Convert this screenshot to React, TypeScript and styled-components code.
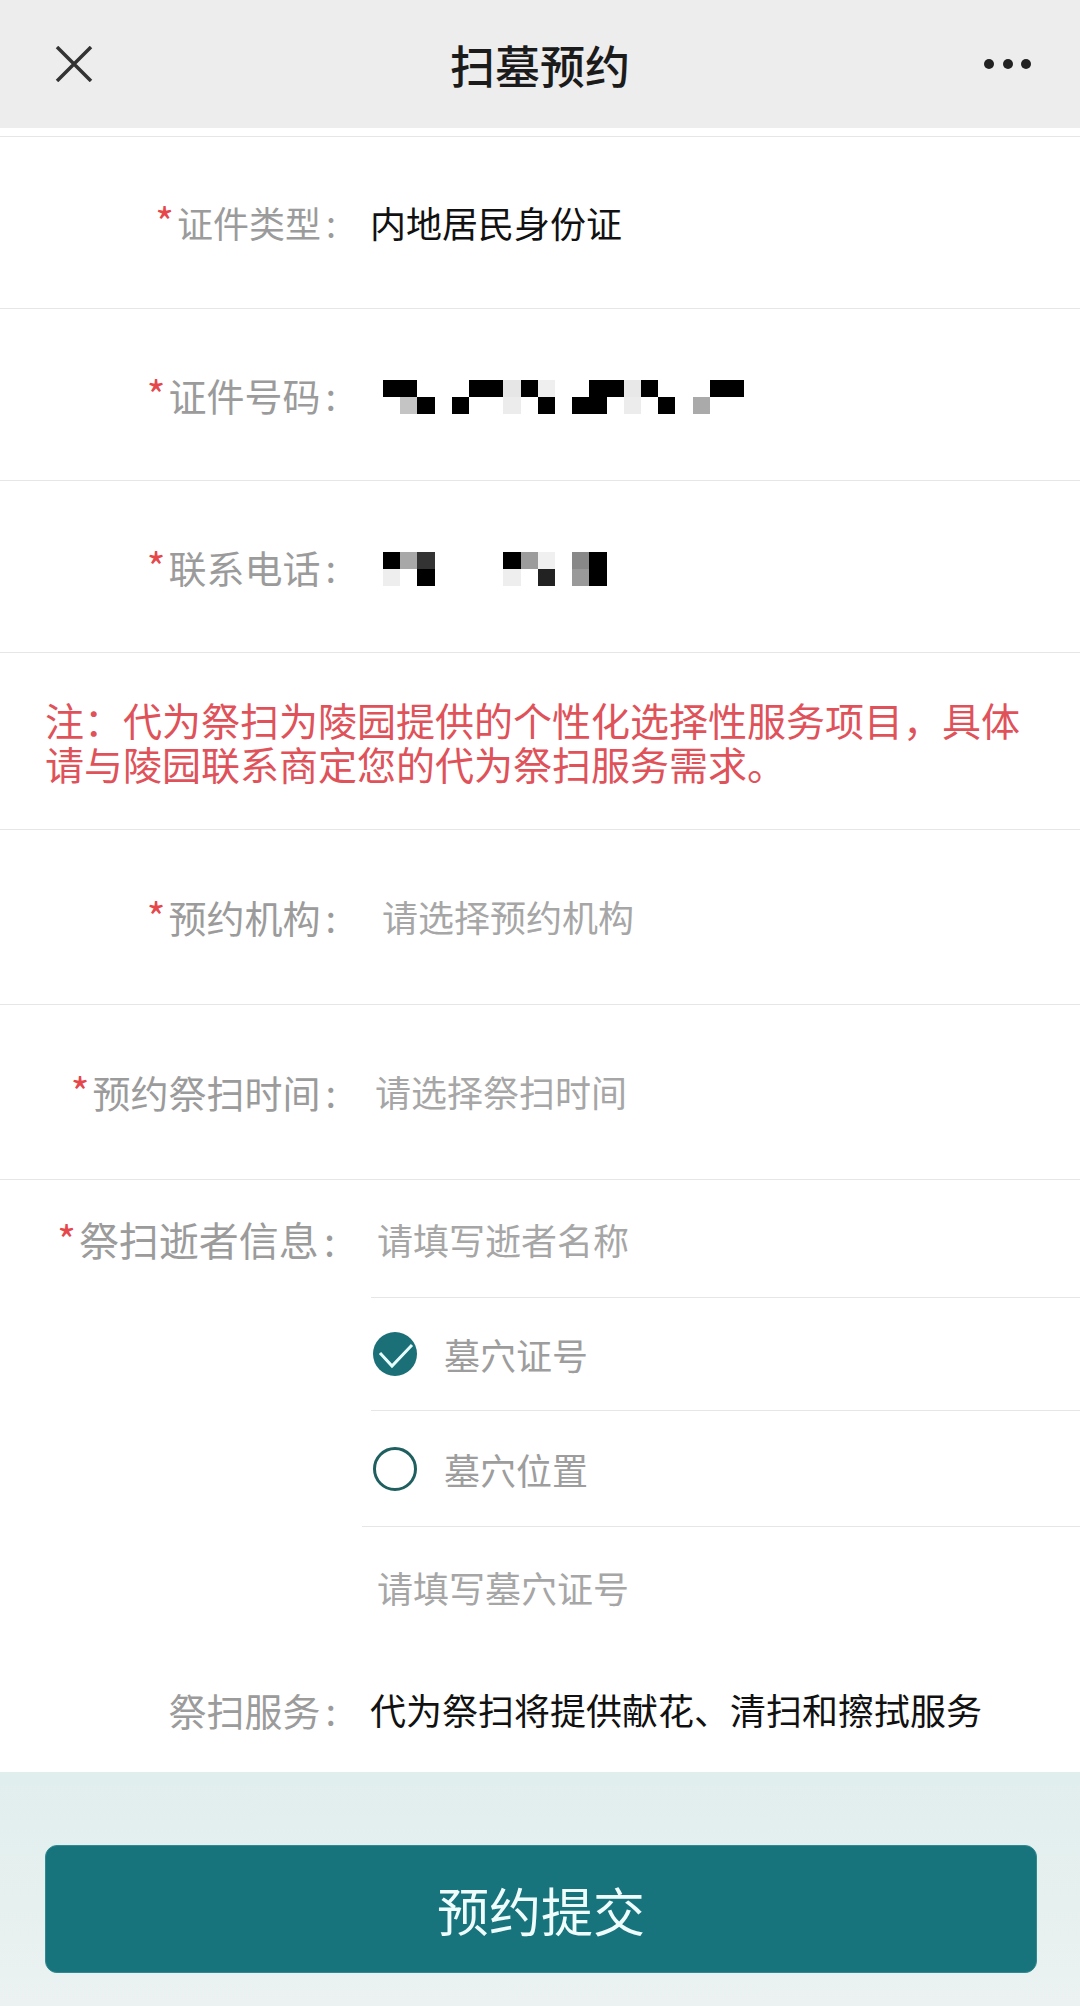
import React from "react";
import styled, { createGlobalStyle } from "styled-components";

type Cell = [number, number, string];

const idCells: Cell[] = [
  [0, 0, "#000"], [1, 0, "#000"], [5, 0, "#000"], [6, 0, "#000"], [7, 0, "#e6e6e6"],
  [8, 0, "#000"], [9, 0, "#efefef"], [12, 0, "#000"], [13, 0, "#000"], [14, 0, "#e8e8e8"],
  [15, 0, "#000"], [19, 0, "#000"], [20, 0, "#000"],
  [1, 1, "#c4c4c4"], [2, 1, "#000"], [4, 1, "#000"], [7, 1, "#ececec"], [9, 1, "#000"],
  [11, 1, "#000"], [12, 1, "#000"], [14, 1, "#ececec"], [16, 1, "#000"], [18, 1, "#aaa"],
];

const phoneCells: Cell[] = [
  [0, 0, "#000"], [1, 0, "#a8a8a8"], [2, 0, "#333"], [7, 0, "#000"], [8, 0, "#9c9c9c"],
  [9, 0, "#f0f0f0"], [11, 0, "#888"], [12, 0, "#000"],
  [0, 1, "#eee"], [2, 1, "#000"], [7, 1, "#eee"], [9, 1, "#222"], [11, 1, "#999"], [12, 1, "#000"],
];

const GlobalStyle = createGlobalStyle`
  body {
    margin: 0;
    background: #fff;
    font-family: "Noto Sans CJK SC", "Noto Sans", sans-serif;
  }
`;

const Page = styled.div`
  width: 1080px;
  min-height: 2006px;
  display: flex;
  flex-direction: column;
  background: #fff;
`;

const Header = styled.header`
  height: 128px;
  background: #ededed;
  display: grid;
  grid-template-columns: 160px 1fr 160px;
  align-items: center;
`;

const CloseButton = styled.div`
  padding-left: 55px;
  display: flex;
`;

const Title = styled.h1`
  margin: 0;
  text-align: center;
  font-size: 45px;
  font-weight: 500;
  color: #1b1b1b;
`;

const MoreButton = styled.div`
  display: flex;
  justify-content: flex-end;
  gap: 8.5px;
  padding-right: 49px;
`;

const Dot = styled.span`
  width: 10px;
  height: 10px;
  border-radius: 50%;
  background: #222;
`;

const Form = styled.div`
  margin-top: 8px;
  border-top: 1px solid #e6e6e6;
`;

const Field = styled.div<{ $h: number; $line?: boolean }>`
  display: grid;
  grid-template-columns: 340px 1fr;
  align-items: center;
  height: ${(p) => p.$h}px;
  box-sizing: border-box;
  border-bottom: ${(p) => (p.$line === false ? "none" : "1px solid #e6e6e6")};
`;

const Label = styled.div<{ $size?: number }>`
  text-align: right;
  padding-right: 4px;
  font-size: ${(p) => p.$size ?? 38}px;
  line-height: 1.2;
  color: #9b9b9b;
  white-space: nowrap;
`;

const Star = styled.span`
  font-size: 40px;
  line-height: 0;
  margin-right: 3px;
  color: #e5474b;
`;

const Colon = styled.span`
  margin-left: 5px;
`;

const Value = styled.div<{ $muted?: boolean; $indent?: number }>`
  padding-left: ${(p) => p.$indent ?? 30}px;
  font-size: 36px;
  line-height: 1.2;
  color: ${(p) => (p.$muted ? "#a6a6a6" : "#111")};
  white-space: nowrap;
`;

const MosaicBox = styled.div`
  padding-left: 43px;
  display: flex;
  align-items: center;
  margin-top: 6px;
`;

const Note = styled.div`
  height: 177px;
  box-sizing: border-box;
  border-bottom: 1px solid #e6e6e6;
  padding: 0 45px;
  display: flex;
  align-items: center;
  font-size: 39px;
  line-height: 44px;
  color: #e0525a;
`;

const Block = styled.div`
  display: grid;
  grid-template-columns: 362px 1fr;
`;

const BlockLabel = styled(Label)`
  height: 118px;
  display: flex;
  align-items: center;
  justify-content: flex-end;
  padding-right: 27px;
`;

const SubList = styled.div`
  display: flex;
  flex-direction: column;
`;

const SubRow = styled.div<{ $h: number; $inset?: number; $line?: boolean }>`
  height: ${(p) => p.$h}px;
  box-sizing: border-box;
  margin-left: ${(p) => p.$inset ?? 0}px;
  display: flex;
  align-items: center;
  gap: 27px;
  padding-left: ${(p) => 15 - (p.$inset ?? 0)}px;
  border-bottom: ${(p) => (p.$line ? "1px solid #e6e6e6" : "none")};
  font-size: 36px;
  color: #a6a6a6;
`;

const RadioRow = styled(SubRow)`
  padding-left: ${(p) => 11 - (p.$inset ?? 0)}px;
  color: #9d9d9d;
`;

const Footer = styled.div`
  flex: 1;
  background: linear-gradient(180deg, #e1eeee 0%, #e6f0ef 55%, #ecf2f2 100%);
  padding: 73px 43px 32px 45px;
`;

const SubmitButton = styled.button`
  width: 100%;
  height: 128px;
  border: 1px solid #2f8a92;
  border-radius: 12px;
  background: #17737c;
  color: #eefcfc;
  font-family: inherit;
  font-size: 52px;
  font-weight: 400;
`;

const Mosaic = ({ cells, cols }: { cells: Cell[]; cols: number }) => (
  <svg width={cols * 17.2} height={34.4} viewBox={`0 0 ${cols} 2`} preserveAspectRatio="none" shapeRendering="crispEdges">
    {cells.map(([x, y, c], i) => (
      <rect key={i} x={x} y={y} width={1} height={1} fill={c} />
    ))}
  </svg>
);

const Radio = ({ checked }: { checked?: boolean }) => (
  <svg width="44" height="44" viewBox="0 0 44 44">
    {checked ? (
      <>
        <circle cx="22" cy="22" r="22" fill="#1b6f76" />
        <polyline points="7,21 19,34 39,13" fill="none" stroke="#e6ffff" strokeWidth="3" />
      </>
    ) : (
      <circle cx="22" cy="22" r="20.5" fill="none" stroke="#1f5f5f" strokeWidth="3" />
    )}
  </svg>
);

const App = () => {
  return (
    <Page>
      <GlobalStyle />
      <Header>
        <CloseButton>
          <svg width="38" height="36" viewBox="0 0 38 36">
            <path d="M2 1 L36 35 M36 1 L2 35" stroke="#333" strokeWidth="3.5" fill="none" />
          </svg>
        </CloseButton>
        <Title>扫墓预约</Title>
        <MoreButton>
          <Dot />
          <Dot />
          <Dot />
        </MoreButton>
      </Header>

      <Form>
        <Field $h={172}>
          <Label $size={36}><Star>*</Star>证件类型<Colon>:</Colon></Label>
          <Value>内地居民身份证</Value>
        </Field>
        <Field $h={172}>
          <Label><Star>*</Star>证件号码<Colon>:</Colon></Label>
          <MosaicBox><Mosaic cells={idCells} cols={22} /></MosaicBox>
        </Field>
        <Field $h={172}>
          <Label><Star>*</Star>联系电话<Colon>:</Colon></Label>
          <MosaicBox><Mosaic cells={phoneCells} cols={13} /></MosaicBox>
        </Field>

        <Note>注：代为祭扫为陵园提供的个性化选择性服务项目，具体请与陵园联系商定您的代为祭扫服务需求。</Note>

        <Field $h={175}>
          <Label><Star>*</Star>预约机构<Colon>:</Colon></Label>
          <Value $muted $indent={42}>请选择预约机构</Value>
        </Field>
        <Field $h={175}>
          <Label><Star>*</Star>预约祭扫时间<Colon>:</Colon></Label>
          <Value $muted $indent={35}>请选择祭扫时间</Value>
        </Field>

        <Block>
          <div>
            <BlockLabel $size={40}><Star>*</Star>祭扫逝者信息<Colon>:</Colon></BlockLabel>
          </div>
          <SubList>
            <SubRow $h={118} $inset={9} $line>请填写逝者名称</SubRow>
            <RadioRow $h={113} $inset={9} $line>
              <Radio checked />
              墓穴证号
            </RadioRow>
            <RadioRow $h={116} $line>
              <Radio />
              墓穴位置
            </RadioRow>
            <SubRow $h={120}>请填写墓穴证号</SubRow>
          </SubList>
        </Block>

        <Field $h={125} $line={false}>
          <Label>祭扫服务<Colon>:</Colon></Label>
          <Value>代为祭扫将提供献花、清扫和擦拭服务</Value>
        </Field>
      </Form>

      <Footer>
        <SubmitButton>预约提交</SubmitButton>
      </Footer>
    </Page>
  );
};

export default App;
